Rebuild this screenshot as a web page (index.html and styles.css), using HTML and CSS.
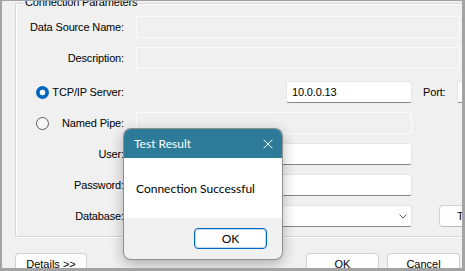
FILE: index.html
```html
<!DOCTYPE html>
<html lang="en">
<head>
  <meta charset="UTF-8" />
  <title>ODBC Data Source Setup</title>
  <link rel="stylesheet" href="styles.css">
</head>
<body>
  <div class="window">
    <div class="group">
      <span class="legend">Connection Parameters</span>
      <div class="rows">
        <div class="row">
          <label class="lbl">Data Source Name:</label>
          <div class="input off wide"></div>
        </div>
        <div class="row">
          <label class="lbl">Description:</label>
          <div class="input off wide"></div>
        </div>
        <div class="row tcp">
          <label class="lbl radio-lbl"><span class="radio checked"></span><span class="txt">TCP/IP Server:</span></label>
          <div class="input on server">10.0.0.13</div>
          <label class="port-lbl">Port:</label>
          <div class="input on port"></div>
        </div>
        <div class="row">
          <label class="lbl radio-lbl"><span class="radio"></span><span class="txt">Named Pipe:</span></label>
          <div class="input off mid"></div>
        </div>
        <div class="row">
          <label class="lbl">User:</label>
          <div class="input on mid"></div>
        </div>
        <div class="row">
          <label class="lbl">Password:</label>
          <div class="input on mid"></div>
        </div>
        <div class="row">
          <label class="lbl">Database:</label>
          <div class="input on mid select">
            <svg width="8" height="5" viewBox="0 0 8 5"><path d="M0.5 0.5 L4 4 L7.5 0.5" fill="none" stroke="#5c5c5c" stroke-width="1"/></svg>
          </div>
          <button class="btn test">Test</button>
        </div>
      </div>
    </div>

    <div class="actions">
      <button class="btn details">Details &gt;&gt;</button>
      <button class="btn ok">OK</button>
      <button class="btn cancel">Cancel</button>
    </div>

    <div class="dialog" role="dialog" aria-label="Test Result">
      <div class="dlg-title">
        <span>Test Result</span>
        <svg class="close" width="10" height="10" viewBox="0 0 10 10"><path d="M0.5 0.5 L9.5 9.5 M9.5 0.5 L0.5 9.5" stroke="#fff" stroke-width="1"/></svg>
      </div>
      <div class="dlg-body">Connection Successful</div>
      <div class="dlg-foot">
        <button class="btn default">OK</button>
      </div>
    </div>
  </div>
</body>
</html>
```

FILE: styles.css
```css
body {
  margin: 0;
  font-family: "Liberation Sans", Arial, sans-serif;
  font-size: 11px;
  color: #000;
}
.window {
  position: relative;
  width: 465px;
  height: 271px;
  box-sizing: border-box;
  background: #f0f0f0;
  border: solid #a3a3a3;
  border-width: 1px 3px 3px 2px;
  overflow: hidden;
  white-space: nowrap;
  letter-spacing: -0.15px;
}
.group {
  position: relative;
  margin: 2px 0 0 13px;
  width: 470px;
  height: 234px;
  box-sizing: border-box;
  border: 1px solid #d6d6d6;
  box-shadow: inset 1px 1px 0 #fff, 1px 1px 0 #fff;
  padding-top: 12px;
}
.legend {
  position: absolute;
  left: 8px;
  top: -10px;
  padding: 0 1px;
  line-height: 16px;
  background: #f0f0f0;
}
.rows {
  display: flex;
  flex-direction: column;
  gap: 9px;
}
.row {
  display: flex;
  align-items: center;
  height: 22px;
}
.row.tcp {
  margin-top: 3px;
}
.lbl {
  flex: none;
  width: 108px;
  margin-right: 12px;
  text-align: right;
}
.radio-lbl {
  display: flex;
  align-items: center;
}
.radio-lbl .txt {
  flex: 1;
  text-align: right;
}
.radio {
  flex: none;
  width: 13px;
  height: 13px;
  margin-left: 20px;
  box-sizing: border-box;
  border: 1px solid #5d5d5d;
  border-radius: 50%;
  background: #f6f6f6;
}
.radio.checked {
  border: none;
  background: radial-gradient(circle, #fff 0 2.6px, #0067c0 3.2px);
}
.input {
  flex: none;
  height: 22px;
  box-sizing: border-box;
  line-height: 20px;
}
.input.off {
  background: #f0f0f0;
  border: 1px solid #fbfbfb;
}
.input.on {
  background: #fff;
  border: 1px solid #e5e5e5;
  border-bottom-color: #868686;
  border-radius: 3px;
  padding-left: 5px;
}
.wide { width: 324px; }
.mid { width: 276px; }
.server {
  width: 126px;
  margin-left: 150px;
}
.port-lbl {
  flex: none;
  width: 34px;
  margin-left: 11px;
}
.port { width: 30px; }
.select {
  display: flex;
  align-items: center;
  justify-content: flex-end;
  padding-right: 4px;
  border-color: #8f8f8f;
}
.btn {
  flex: none;
  height: 23px;
  padding: 0;
  box-sizing: border-box;
  font: inherit;
  color: #000;
  background: #fdfdfd;
  border: 1px solid #d0d0d0;
  border-bottom-color: #bcbcbc;
  border-radius: 4px;
  line-height: 21px;
}
.test {
  width: 56px;
  height: 22px;
  margin-left: 27px;
}
.actions {
  display: flex;
  margin: 16px 0 0 13px;
}
.details { width: 72px; }
.ok {
  width: 73px;
  margin-left: 219px;
}
.cancel {
  width: 73px;
  margin-left: 8px;
}
.dialog {
  position: absolute;
  left: 121px;
  top: 127px;
  width: 160px;
  height: 132px;
  box-sizing: border-box;
  display: flex;
  flex-direction: column;
  border: 1px solid rgba(0, 0, 0, 0.4);
  border-radius: 8px;
  overflow: hidden;
  background: #f0f0f0;
  box-shadow: 0 4px 14px rgba(0, 0, 0, 0.28);
  font-family: "Segoe UI", Lato, sans-serif;
  font-size: 12px;
  letter-spacing: 0;
}
.dlg-title {
  display: flex;
  align-items: center;
  height: 29px;
  padding: 0 9px 0 10px;
  background: #2d7b99;
  color: #fff;
}
.close {
  margin-left: auto;
}
.dlg-body {
  display: flex;
  align-items: center;
  height: 60px;
  padding-left: 12px;
  background: #fff;
}
.dlg-foot {
  flex: 1;
  display: flex;
  justify-content: flex-end;
  align-items: flex-start;
  padding: 10px 15px 0 0;
}
.default {
  width: 73px;
  height: 21px;
  line-height: 19px;
  background: #fff;
  border: 1px solid #0067c0;
  box-shadow: inset 0 0 0 1px rgba(0, 103, 192, 0.25);
}
```
